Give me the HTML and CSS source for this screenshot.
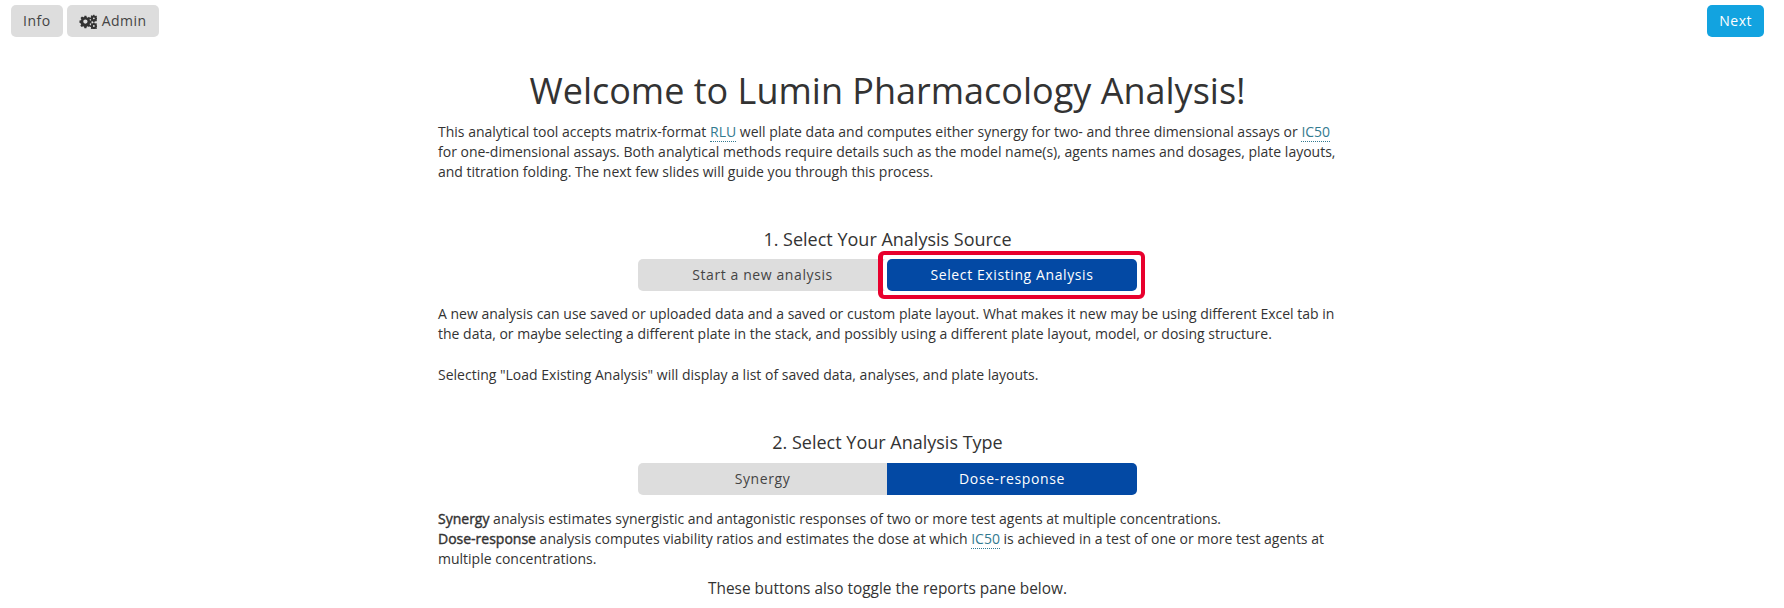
FILE: index.html
```html
<!DOCTYPE html>
<html lang="en">
<head>
<meta charset="utf-8">
<title>Lumin Pharmacology Analysis</title>
<link rel="stylesheet" href="styles.css">
</head>
<body>
<header class="topbar">
  <div class="topbar-left">
    <button class="btn">Info</button>
    <button class="btn"><svg class="cogs" viewBox="0 0 20 16" width="18" height="15" aria-hidden="true"><g fill="#333"><path fill-rule="evenodd" d="M6 1.6h2.2l.4 1.7 1 .4 1.5-.9 1.6 1.6-.9 1.5.4 1 1.7.4v2.4l-1.7.4-.4 1 .9 1.5-1.6 1.6-1.5-.9-1 .4-.4 1.7H6l-.4-1.700-1-.4-1.500.9-1.600-1.600.9-1.500-.4-1L.5 9.300V6.900l1.700-.4.4-1-.9-1.500 1.600-1.600 1.500.9 1-.4zM7.100 5.700a2.400 2.400 0 1 0 0 4.800 2.400 2.400 0 0 0 0-4.800z"/><path fill-rule="evenodd" d="M15.800.5h1.400l.2 1 .7.3.9-.5 1 1-.5.9.3.7.2.1v1.400l-.2.1-.3.7.5.9-1 1-.9-.5-.7.3-.2 1h-1.400l-.2-1-.7-.3-.9.5-1-1 .5-.9-.3-.7-1-.2V3.800l1-.2.3-.7-.5-.9 1-1 .9.5.7-.3zM16.500 3.500a1 1 0 1 0 0 2 1 1 0 0 0 0-2z"/><path fill-rule="evenodd" d="M15.800 9h1.400l.2 1 .7.3.9-.5 1 1-.5.9.3.7.2.1v1.400l-.2.1-.3.7.5.9-1 1-.9-.5-.7.3-.2.600h-1.400l-.2-.6-.7-.3-.9.5-1-1 .5-.9-.3-.7-1-.2v-1.400l1-.2.3-.7-.5-.9 1-1 .9.5.7-.3zM16.500 12a1 1 0 1 0 0 2 1 1 0 0 0 0-2z"/></g></svg> Admin</button>
  </div>
  <button class="btn btn-next">Next</button>
</header>
<main class="content">
  <h1 class="title">Welcome to Lumin Pharmacology Analysis!</h1>
  <p class="para para-intro">This analytical tool accepts matrix-format <abbr class="term">RLU</abbr> well plate data and computes either synergy for two- and three dimensional assays or <abbr class="term">IC50</abbr> for one-dimensional assays. Both analytical methods require details such as the model name(s), agents names and dosages, plate layouts, and titration folding. The next few slides will guide you through this process.</p>

  <h2 class="step step-first">1. Select Your Analysis Source</h2>
  <div class="toggle">
    <button class="seg seg-off">Start a new analysis</button>
    <button class="seg seg-on seg-marked">Select Existing Analysis</button>
  </div>
  <p class="para para-source">A new analysis can use saved or uploaded data and a saved or custom plate layout. What makes it new may be using different Excel tab in the data, or maybe selecting a different plate in the stack, and possibly using a different plate layout, model, or dosing structure.</p>
  <p class="para para-gap">Selecting "Load Existing Analysis" will display a list of saved data, analyses, and plate layouts.</p>

  <h2 class="step step-second">2. Select Your Analysis Type</h2>
  <div class="toggle toggle-second">
    <button class="seg seg-off">Synergy</button>
    <button class="seg seg-on">Dose-response</button>
  </div>
  <p class="para para-type"><strong>Synergy</strong> analysis estimates synergistic and antagonistic responses of two or more test agents at multiple concentrations.<br><strong>Dose-response</strong> analysis computes viability ratios and estimates the dose at which <abbr class="term">IC50</abbr> is achieved in a test of one or more test agents at multiple concentrations.</p>
  <p class="note">These buttons also toggle the reports pane below.</p>
</main>
</body>
</html>
```
FILE: styles.css
```css
html, body { margin: 0; padding: 0; }
body {
  font-family: "Open Sans", sans-serif;
  font-size: 14px;
  line-height: 20px;
  color: #333;
  background: #fff;
  height: 608px;
  overflow: hidden;
}
.topbar {
  display: flex;
  justify-content: space-between;
  padding: 5px 20px 0 11px;
}
.topbar-left { display: flex; gap: 4px; }
.btn {
  display: inline-flex;
  align-items: center;
  gap: 5px;
  height: 32px;
  padding: 0 12px;
  border: 0;
  border-radius: 5px;
  background: #ddd;
  color: #444;
  font: 14px/20px "Open Sans", sans-serif;
  letter-spacing: .5px;
}
.cogs { display: block; }
.btn-next { background: #12a3e0; color: #fff; }
.content {
  width: 899px;
  margin-left: 438px;
}
.title {
  margin: 34px 0 0;
  font-size: 36px;
  line-height: 40px;
  font-weight: 400;
  text-align: center;
}
.para { margin: 0; }
.para-intro { margin-top: 11px; }
.para-source { margin-top: 13px; }
.para-gap { margin-top: 21px; }
.para-type { margin-top: 14px; }
.para strong {
  font-weight: 400;
  -webkit-text-stroke: .4px #333;
}
.term {
  color: #337a8f;
  text-decoration: none;
  border-bottom: 1px dotted #337a8f;
}
.step {
  margin: 0;
  font-size: 18px;
  line-height: 20px;
  font-weight: 400;
  text-align: center;
}
.step-first { margin-top: 47px; }
.step-second { margin-top: 47px; }
.toggle {
  display: flex;
  justify-content: center;
  margin-top: 10px;
}
.toggle-second { margin-top: 11px; }
.seg {
  width: 250px;
  height: 32px;
  padding: 0;
  border: 0;
  font: 14px/20px "Open Sans", sans-serif;
  letter-spacing: .6px;
}
.seg-off {
  width: 249px;
  background: #ddd;
  color: #444;
  border-radius: 5px 0 0 5px;
}
.seg-on {
  background: #0349a4;
  color: #fff;
  font-weight: 500;
  border-radius: 0 5px 5px 0;
}
.seg-marked {
  position: relative;
  border-radius: 5px;
  box-shadow: 0 0 0 4px #fff;
}
.seg-marked::after {
  content: "";
  position: absolute;
  inset: -8px -8px -8px -9px;
  border: 4px solid #e8002d;
  border-left-width: 5px;
  border-radius: 6px;
}
.note {
  margin: 10px 0 0;
  font-size: 15.4px;
  text-align: center;
}
```
